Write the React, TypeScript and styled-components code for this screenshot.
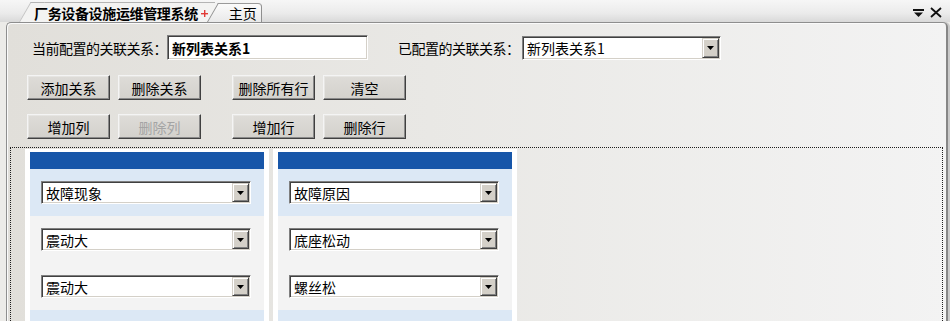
import React from "react";
import styled, { createGlobalStyle } from "styled-components";

const GlobalStyle = createGlobalStyle`
  html, body {
    margin: 0;
    padding: 0;
  }
  body {
    width: 950px;
    height: 321px;
    overflow: hidden;
    background: #ecebe8;
    font-family: "Noto Sans CJK SC", "Noto Sans", sans-serif;
    font-size: 14px;
    color: #000;
  }
`;

const Page = styled.div`
  width: 950px;
  height: 321px;
  display: flex;
  flex-direction: column;
  overflow: hidden;
`;

// ---- tab strip ----
const TabBar = styled.div`
  height: 22px;
  flex: none;
  display: flex;
  align-items: flex-end;
  background: linear-gradient(#f6f6f6, #ebebeb 60%, #d9d9d9);
`;

const Tab = styled.div<{ $active?: boolean }>`
  position: relative;
  z-index: 0;
  height: ${(p) => (p.$active ? 20 : 19)}px;
  display: flex;
  align-items: center;
  box-sizing: border-box;
  margin-left: ${(p) => (p.$active ? 30 : 3)}px;
  padding: 0 ${(p) => (p.$active ? 7 : 4)}px 0 ${(p) => (p.$active ? 4 : 11)}px;
  font-weight: ${(p) => (p.$active ? 700 : 400)};
  letter-spacing: ${(p) => (p.$active ? "-0.35px" : "0")};
  line-height: 18px;
  background: ${(p) => (p.$active ? "#f3f3f2" : "linear-gradient(#fbfbfb, #e9e9e9)")};
  border-top: 1px solid ${(p) => (p.$active ? "#b4b4b4" : "#9a9a9a")};
  border-right: ${(p) => (p.$active ? "none" : "1px solid #8f8f8f")};
  border-top-right-radius: ${(p) => (p.$active ? 0 : 4)}px;

  &::before {
    content: "";
    position: absolute;
    z-index: -1;
    left: -11px;
    top: -1px;
    bottom: 0;
    width: 13px;
    background: ${(p) => (p.$active ? "#f3f3f2" : "linear-gradient(#fbfbfb, #e9e9e9)")};
    border-left: 1px solid ${(p) => (p.$active ? "#c2c2c2" : "#8f8f8f")};
    border-top: 1px solid ${(p) => (p.$active ? "#b4b4b4" : "#9a9a9a")};
    transform: skewX(-30deg);
    transform-origin: bottom left;
  }
`;

const Plus = styled.svg`
  margin-left: 3px;
  margin-top: 2px;
`;

const TabTools = styled.div`
  margin-left: auto;
  align-self: center;
  display: flex;
  align-items: center;
  gap: 6px;
  padding: 3px 8px 0 0;
`;

// ---- frame ----
const Frame = styled.div`
  flex: 1;
  min-height: 0;
  display: flex;
  flex-direction: column;
  margin: 0 2px 0 6px;
  border: 1px solid #8e8e8e;
  border-right: 2px solid #868686;
  border-bottom: none;
  border-radius: 5px 5px 0 0;
  box-shadow: inset 1px 1px 0 #fafafa, 2px 0 0 #c9c9c9;
  background: linear-gradient(90deg, #e1dfda 0%, #e9e8e5 45%, #f3f3f3 100%);
`;

const Controls = styled.div`
  padding: 12px 0 0 20px;
`;

const ConfigRow = styled.div`
  display: flex;
  align-items: center;
  height: 25px;
  padding-left: 5px;
`;

const Label = styled.span<{ $width: number; $gap?: number }>`
  width: ${(p) => p.$width}px;
  margin-left: ${(p) => p.$gap ?? 0}px;
  letter-spacing: -0.5px;
  white-space: nowrap;
`;

const TextField = styled.div`
  box-sizing: border-box;
  width: 201px;
  height: 25px;
  padding: 0 4px;
  display: flex;
  align-items: center;
  background: #fff;
  font-weight: 700;
  border: 1px solid;
  border-color: #7f7f7f #ffffff #ffffff #7f7f7f;
  box-shadow: inset 1px 1px 0 #404040, inset -1px -1px 0 #d4d0c8;
`;

const Dropdown = styled.div<{ $width?: number }>`
  box-sizing: border-box;
  width: ${(p) => (p.$width ? `${p.$width}px` : "100%")};
  height: ${(p) => (p.$width ? 24 : 23)}px;
  padding: 1px;
  display: flex;
  background: #fff;
  border: 1px solid;
  border-color: #7f7f7f #ffffff #ffffff #7f7f7f;
  box-shadow: inset 1px 1px 0 #404040, inset -1px -1px 0 #d4d0c8;
`;

const DropText = styled.span`
  flex: 1;
  padding-left: 3px;
  display: flex;
  align-items: center;
  white-space: nowrap;
  overflow: hidden;
`;

const DropArrow = styled.span`
  box-sizing: border-box;
  width: 17px;
  display: flex;
  align-items: center;
  justify-content: center;
  background: #d4d0c8;
  border: 1px solid;
  border-color: #d4d0c8 #404040 #404040 #d4d0c8;
  box-shadow: inset 1px 1px 0 #fff, inset -1px -1px 0 #808080;
`;

const ButtonRow = styled.div<{ $top: number }>`
  display: flex;
  gap: 31px;
  margin-top: ${(p) => p.$top}px;
`;

const ButtonGroup = styled.div`
  display: flex;
  gap: 8px;
`;

const Button = styled.button`
  box-sizing: border-box;
  width: 83px;
  height: 25px;
  padding: 0;
  font: inherit;
  color: #000;
  background: linear-gradient(#dedcd8, #d3d1cc);
  border: 1px solid;
  border-color: #f4f4f4 #404040 #404040 #f4f4f4;
  box-shadow: inset -1px -1px 0 #8a8a8a, inset 1px 1px 0 #e6e5e2;

  &:disabled {
    color: #a4a4a4;
  }
`;

// ---- relation canvas ----
const Canvas = styled.div`
  flex: 1;
  min-height: 0;
  display: flex;
  align-items: flex-start;
  gap: 4px;
  margin: 8px 3px 0 3px;
  padding: 1px 0 0 14px;
  border: 1px dotted #1e1e1e;
  border-bottom: none;
`;

const Card = styled.div`
  width: 244px;
  box-sizing: border-box;
  padding: 3px 5px 0;
  background: #fff;
`;

const CardHead = styled.div`
  height: 17px;
  background: #1756a9;
`;

const Row = styled.div<{ $tone: "blue" | "gray" }>`
  height: 47px;
  box-sizing: border-box;
  padding: 12px 13px 0 11px;
  background: ${(p) => (p.$tone === "blue" ? "#dce8f5" : "#f3f3f3")};
`;

const Arrow = () => (
  <svg width="7" height="4" viewBox="0 0 7 4">
    <polygon points="0,0 7,0 3.5,4" fill="#000" />
  </svg>
);

const Select = ({ value, width }: { value: string; width?: number }) => (
  <Dropdown $width={width}>
    <DropText>{value}</DropText>
    <DropArrow>
      <Arrow />
    </DropArrow>
  </Dropdown>
);

const columns = [
  ["故障现象", "震动大", "震动大"],
  ["故障原因", "底座松动", "螺丝松"],
];

const App = () => {
  return (
    <>
      <GlobalStyle />
      <Page>
        <TabBar>
          <Tab $active>
            厂务设备设施运维管理系统
            <Plus width="7" height="7" viewBox="0 0 7 7">
              <rect x="3" y="0" width="1.4" height="7" fill="#e23a36" />
              <rect x="0" y="3" width="7" height="1.4" fill="#e23a36" />
            </Plus>
          </Tab>
          <Tab>主页</Tab>
          <TabTools>
            <svg width="11" height="8" viewBox="0 0 11 8">
              <rect x="0" y="0" width="11" height="2" fill="#111" />
              <polygon points="1,3.5 10,3.5 5.5,8" fill="#111" />
            </svg>
            <svg width="12" height="11" viewBox="0 0 12 11">
              <path d="M1 1 L11 10 M11 1 L1 10" stroke="#111" strokeWidth="1.8" />
            </svg>
          </TabTools>
        </TabBar>

        <Frame>
          <Controls>
            <ConfigRow>
              <Label $width={135}>当前配置的关联关系：</Label>
              <TextField>新列表关系1</TextField>
              <Label $width={124} $gap={30}>
                已配置的关联关系：
              </Label>
              <Select value="新列表关系1" width={199} />
            </ConfigRow>

            <ButtonRow $top={15}>
              <ButtonGroup>
                <Button>添加关系</Button>
                <Button>删除关系</Button>
              </ButtonGroup>
              <ButtonGroup>
                <Button>删除所有行</Button>
                <Button>清空</Button>
              </ButtonGroup>
            </ButtonRow>
            <ButtonRow $top={14}>
              <ButtonGroup>
                <Button>增加列</Button>
                <Button disabled>删除列</Button>
              </ButtonGroup>
              <ButtonGroup>
                <Button>增加行</Button>
                <Button>删除行</Button>
              </ButtonGroup>
            </ButtonRow>
          </Controls>

          <Canvas>
            {columns.map((col, i) => (
              <Card key={i}>
                <CardHead />
                {col.map((v, j) => (
                  <Row key={j} $tone={j === 0 ? "blue" : "gray"}>
                    <Select value={v} />
                  </Row>
                ))}
                <Row $tone="blue" />
              </Card>
            ))}
          </Canvas>
        </Frame>
      </Page>
    </>
  );
};

export default App;
